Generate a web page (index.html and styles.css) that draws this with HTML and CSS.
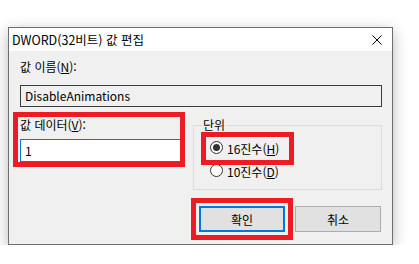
FILE: index.html
```html
<!DOCTYPE html>
<html lang="ko">
<head>
    <meta charset="UTF-8">
    <title>DWORD(32비트) 값 편집</title>
    <link rel="stylesheet" href="styles.css">
</head>
<body>
    <div class="dialog">
        <div class="titlebar">
            <span class="title">DWORD(32비트) 값 편집</span>
            <svg class="close" width="10" height="10" viewBox="0 0 10 10">
                <path d="M0.5 0.5 L9.5 9.5 M9.5 0.5 L0.5 9.5" stroke="#000" stroke-width="1" fill="none"/>
            </svg>
        </div>
        <div class="content">
            <div class="label">값 이름(<u>N</u>):</div>
            <div class="field readonly">DisableAnimations</div>

            <div class="row">
                <div class="data-col mark">
                    <div class="label">값 데이터(<u>V</u>):</div>
                    <div class="field edit">1</div>
                </div>
                <fieldset class="group">
                    <legend>단위</legend>
                    <div class="radio mark">
                        <span class="circle checked"></span>
                        <span>16진수(<u>H</u>)</span>
                    </div>
                    <div class="radio">
                        <span class="circle"></span>
                        <span>10진수(<u>D</u>)</span>
                    </div>
                </fieldset>
            </div>

            <div class="buttons">
                <button class="btn default mark-btn">확인</button>
                <button class="btn">취소</button>
            </div>
        </div>
    </div>
</body>
</html>
```

FILE: styles.css
```css
/* базовые настройки */
body, html {
    margin: 0;
    padding: 0;
    background: #fff;
    font-family: "Noto Sans CJK KR", "Noto Sans", sans-serif;
    font-size: 12px;
    color: #000;
}

.dialog {
    margin: 27px 0 0 8px;
    width: 383px;
    border: 1px solid #6e6e6e;
    background: #f0f0f0;
    box-shadow: 0 4px 14px rgba(0,0,0,0.28);
}

/* заголовок */
.titlebar {
    height: 23px;
    background: #fff;
    display: flex;
    align-items: center;
    padding: 0 10px 0 3px;
}

.title {
    flex: 1;
    line-height: 16px;
    font-size: 12.5px;
}

.close {
    display: block;
}

/* содержимое */
.content {
    padding: 8px 10px 12px 11px;
}

.label {
    line-height: 16px;
    height: 16px;
}

.field {
    box-sizing: border-box;
    line-height: 18px;
    padding: 1px 4px;
    margin-top: 10px;
}

.readonly {
    height: 22px;
    border: 1px solid #3a3a3a;
    background: #f0f0f0;
}

.edit {
    height: 23px;
    margin: 6px 0 0 0;
    width: 161px;
    border: 1px solid #0078d7;
    background: #fff;
    line-height: 19px;
}

.row {
    display: flex;
    align-items: flex-start;
    margin-top: 10px;
}

.data-col {
    width: 162px;
    margin-left: -2px;
    padding-left: 2px;
    box-sizing: border-box;
}

/* красная рамка-пометка */
.mark {
    outline: 5px solid #ed1c24;
}

.group {
    margin: 0 0 0 13px;
    width: 190px;
    box-sizing: border-box;
    border: 1px solid #dcdcdc;
    padding: 4px 8px 6px 8px;
    min-width: 0;
}

.group legend {
    padding: 0 1px;
    line-height: 16px;
}

.radio {
    height: 23px;
    display: flex;
    align-items: center;
    width: 83px;
    margin-left: 4px;
    line-height: 16px;
}

.circle {
    width: 13px;
    height: 13px;
    border: 1px solid #333;
    border-radius: 50%;
    background: #fff;
    margin: -2px 4px 0 4px;
    box-sizing: border-box;
    display: flex;
    align-items: center;
    justify-content: center;
}

.circle.checked::after {
    content: "";
    width: 7px;
    height: 7px;
    border-radius: 50%;
    background: #333;
}

/* кнопки */
.buttons {
    display: flex;
    justify-content: flex-end;
    gap: 10px;
    margin-top: 16px;
    padding-right: 1px;
}

.btn {
    width: 86px;
    height: 26px;
    box-sizing: border-box;
    background: #e1e1e1;
    border: 1px solid #adadad;
    font-family: inherit;
    font-size: 12px;
    padding: 0;
    color: #000;
}

.btn.default {
    border: 2px solid #0078d7;
}

.mark-btn {
    outline: 5px solid #ed1c24;
    outline-offset: 3px;
}
```
